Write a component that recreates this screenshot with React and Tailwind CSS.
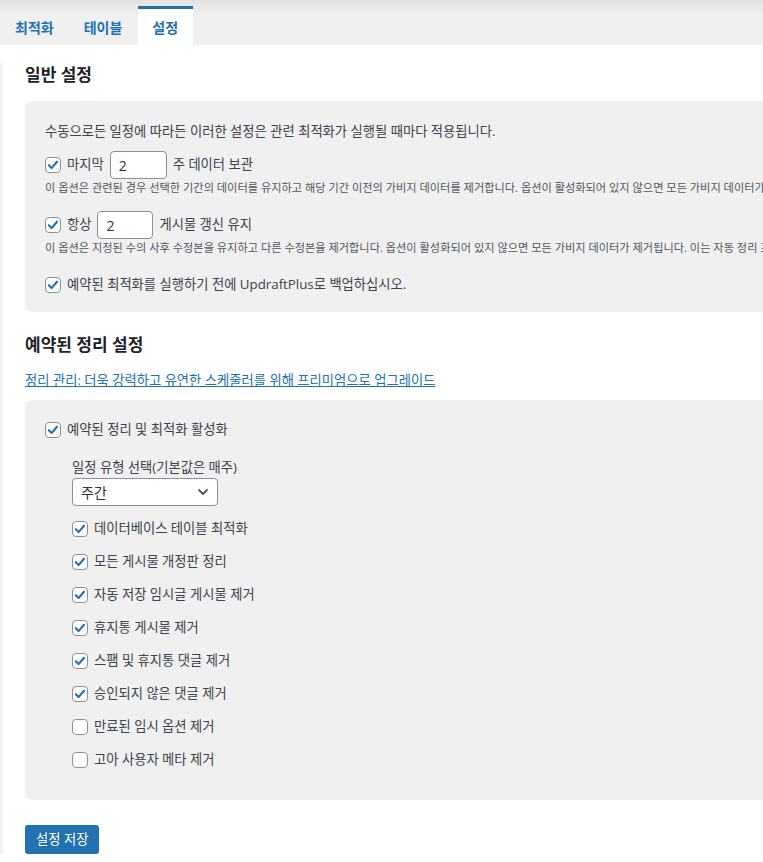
import React from 'react';

const Checkbox = ({ checked }) => (
  <span className="flex h-4 w-4 shrink-0 items-center justify-center rounded-[4px] border border-[#8c8f94] bg-white">
    {checked && (
      <svg viewBox="0 0 14 14" className="h-3.5 w-3.5">
        <path d="M2.8 7.2l2.8 2.9 5.4-6.4" fill="none" stroke="#2271b1" strokeWidth="2.1" strokeLinecap="round" strokeLinejoin="round" />
      </svg>
    )}
  </span>
);

const tabs = [
  { name: '최적화', active: false },
  { name: '테이블', active: false },
  { name: '설정', active: true },
];

const cleanups = [
  { label: '데이터베이스 테이블 최적화', checked: true },
  { label: '모든 게시물 개정판 정리', checked: true },
  { label: '자동 저장 임시글 게시물 제거', checked: true },
  { label: '휴지통 게시물 제거', checked: true },
  { label: '스팸 및 휴지통 댓글 제거', checked: true },
  { label: '승인되지 않은 댓글 제거', checked: true },
  { label: '만료된 임시 옵션 제거', checked: false },
  { label: '고아 사용자 메타 제거', checked: false },
];

const App = () => {
  return (
    <div className="h-[862px] w-full overflow-hidden bg-white font-['Open_Sans','Noto_Sans_CJK_KR',sans-serif] text-[#3c434a]">
      {/* tab bar */}
      <div className="flex h-[45px] items-end gap-[2px] bg-[linear-gradient(to_bottom,#e2e2e3,#f0f0f1_16px)] pl-[1px]">
        {tabs.map((tab) => (
          <div
            key={tab.name}
            className={`flex h-[39px] items-center border-t-[3px] px-[14px] text-[14px] font-semibold text-[#2271b1] ${
              tab.active ? 'border-[#1d72a6] bg-white pr-[15px]' : 'border-transparent'
            }`}
          >
            {tab.name}
          </div>
        ))}
      </div>

      <div className="w-[1000px] border-l-[3px] border-[#f0f0f1] pl-[22px]">
        <h2 className="mt-[18px] text-[17px] font-semibold leading-[24px] text-[#1d2327]">일반 설정</h2>

        <div className="mt-[14px] rounded-lg bg-[#f0f0f1] px-[20px] pb-[17px] pt-[20px] text-[13.3px]">
          <p className="leading-[20px]">수동으로든 일정에 따라든 이러한 설정은 관련 최적화가 실행될 때마다 적용됩니다.</p>

          <div className="mt-[10px] flex h-[28px] items-center gap-[6px]">
            <Checkbox checked />
            <span>마지막</span>
            <div className="flex h-[28px] w-[57px] items-center rounded-[4px] border border-[#8c8f94] bg-white px-[8px] text-[14px] text-[#2c3338]">2</div>
            <span>주 데이터 보관</span>
          </div>
          <p className="mt-[2px] whitespace-nowrap text-[11.2px] leading-[14px] text-[#50575e]">
            이 옵션은 관련된 경우 선택한 기간의 데이터를 유지하고 해당 기간 이전의 가비지 데이터를 제거합니다. 옵션이 활성화되어 있지 않으면 모든 가비지 데이터가
          </p>

          <div className="mt-[16px] flex h-[28px] items-center gap-[6px]">
            <Checkbox checked />
            <span>항상</span>
            <div className="flex h-[28px] w-[56px] items-center rounded-[4px] border border-[#8c8f94] bg-white px-[8px] text-[14px] text-[#2c3338]">2</div>
            <span>게시물 갱신 유지</span>
          </div>
          <p className="mt-[2px] whitespace-nowrap text-[11.2px] leading-[14px] text-[#50575e]">
            이 옵션은 지정된 수의 사후 수정본을 유지하고 다른 수정본을 제거합니다. 옵션이 활성화되어 있지 않으면 모든 가비지 데이터가 제거됩니다. 이는 자동 정리 프
          </p>

          <div className="mt-[20px] flex h-[20px] items-center gap-[6px]">
            <Checkbox checked />
            <span>예약된 최적화를 실행하기 전에 UpdraftPlus로 백업하십시오.</span>
          </div>
        </div>

        <h2 className="mt-[21px] text-[17px] font-semibold leading-[24px] text-[#1d2327]">예약된 정리 설정</h2>
        <a href="#" className="mt-[13px] block text-[13.3px] leading-[20px] text-[#2271b1] underline">
          정리 관리: 더욱 강력하고 유연한 스케줄러를 위해 프리미엄으로 업그레이드
        </a>

        <div className="mt-[10px] rounded-lg bg-[#f0f0f1] px-[20px] pb-[30px] pt-[20px] text-[13.3px]">
          <div className="flex h-[20px] items-center gap-[6px]">
            <Checkbox checked />
            <span>예약된 정리 및 최적화 활성화</span>
          </div>

          <div className="pl-[27px]">
            <p className="mt-[17px] leading-[20px]">일정 유형 선택(기본값은 매주)</p>
            <div className="mt-[1px] flex h-[28px] w-[146px] items-center justify-between rounded-[4px] border border-[#8c8f94] bg-white pl-[8px] pr-[6px] text-[14px] text-[#2c3338]">
              <span>주간</span>
              <svg viewBox="0 0 16 16" className="h-4 w-4">
                <path d="M4 6l4 4 4-4" fill="none" stroke="#50575e" strokeWidth="1.8" strokeLinecap="round" strokeLinejoin="round" />
              </svg>
            </div>

            <div className="mt-[13px] flex flex-col gap-[13px]">
              {cleanups.map((item) => (
                <div key={item.label} className="flex h-[20px] items-center gap-[6px]">
                  <Checkbox checked={item.checked} />
                  <span>{item.label}</span>
                </div>
              ))}
            </div>
          </div>
        </div>

        <button className="mt-[25px] h-[29px] rounded-[3px] bg-[#2271b1] px-[11px] text-[13.3px] text-white">
          설정 저장
        </button>
      </div>
    </div>
  );
};

export default App;
